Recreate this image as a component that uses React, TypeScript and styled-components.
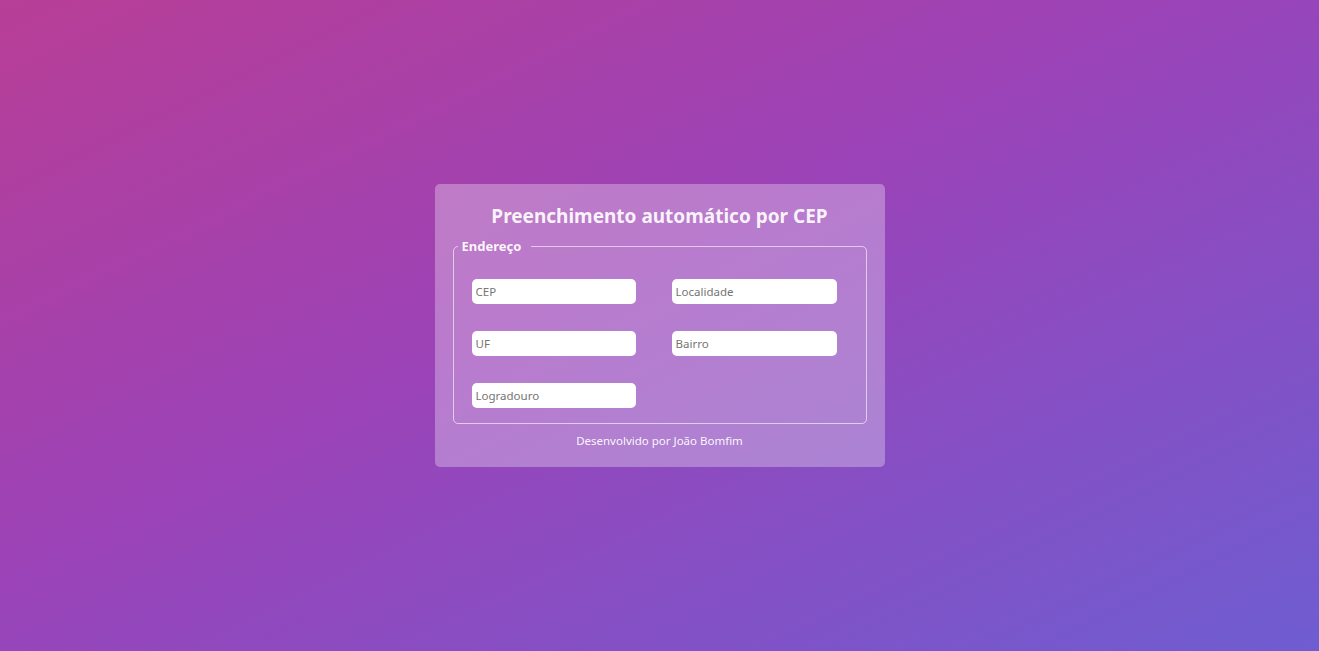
import React from "react";
import styled, { createGlobalStyle } from "styled-components";

const GlobalStyle = createGlobalStyle`
    html, body {
        margin: 0;
        padding: 0;
        height: 100%;
    }
    body {
        font-family: "Noto Sans", "Open Sans", Arial, sans-serif;
    }
    #root {
        height: 100%;
    }
`

const fields = ["CEP", "Localidade", "UF", "Bairro", "Logradouro"]

const App = () => {
    return (
        <Page>
            <GlobalStyle />
            <Card>
                <Title>Preenchimento automático por CEP</Title>
                <Fieldset>
                    <Legend>Endereço</Legend>
                    <Grid>
                        {fields.map((f) => (
                            <Input key={f} placeholder={f} />
                        ))}
                    </Grid>
                </Fieldset>
                <Footer>Desenvolvido por João Bomfim</Footer>
            </Card>
        </Page>
    )
}

export default App

const Page = styled.div`
    width: 100vw;
    height: 100vh;
    display: flex;
    align-items: center;
    justify-content: center;
    background: linear-gradient(to bottom right, #b83e96 0%, #9b43b8 45%, #6e5dd1 100%);
`
const Card = styled.div`
    width: 450px;
    box-sizing: border-box;
    padding: 19px 18px 18px;
    border-radius: 5px;
    background: rgba(255, 255, 255, 0.3);
    display: flex;
    flex-direction: column;
`
const Title = styled.h1`
    margin: 0 0 8px;
    text-align: center;
    font-size: 19px;
    font-weight: 700;
    color: rgba(255, 255, 255, 0.92);
    line-height: 26px;
`
const Fieldset = styled.fieldset`
    margin: 0;
    padding: 24px 29px 15px 18px;
    border: 1px solid rgba(255, 255, 255, 0.6);
    border-radius: 5px;
`
const Legend = styled.legend`
    margin-left: -14px;
    padding: 0 10px 0 4px;
    font-size: 13px;
    font-weight: 700;
    color: rgba(255, 255, 255, 0.95);
    line-height: 18px;
`
const Grid = styled.div`
    display: grid;
    grid-template-columns: 164px 165px;
    column-gap: 36px;
    row-gap: 27px;
`
const Input = styled.input`
    box-sizing: border-box;
    height: 25px;
    width: 100%;
    border: none;
    outline: none;
    border-radius: 5px;
    background: #fff;
    padding: 0 4px;
    font-family: "Noto Sans", "Open Sans", Arial, sans-serif;
    font-size: 11.5px;
    color: #333;
    &::placeholder {
        color: #757575;
    }
`
const Footer = styled.p`
    margin: 9px 0 0;
    text-align: center;
    font-size: 11.5px;
    color: rgba(255, 255, 255, 0.95);
    line-height: 16px;
`
